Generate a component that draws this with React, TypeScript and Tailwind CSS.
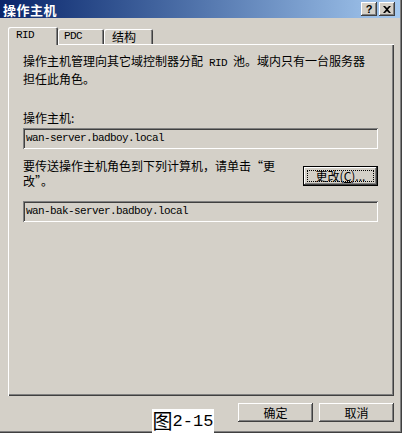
import React from "react";

const raised =
  "shadow-[inset_-1px_-1px_#404040,inset_1px_1px_#ffffff,inset_-2px_-2px_#808080,inset_2px_2px_#d4d0c8]";
const sunken =
  "shadow-[inset_1px_1px_#808080,inset_-1px_-1px_#ffffff,inset_2px_2px_#404040,inset_-2px_-2px_#d4d0c8]";
const cjk = "font-['Noto_Sans_CJK_SC','Liberation_Sans',sans-serif]";
const mono = "font-['Liberation_Mono',monospace] text-[11px] tracking-[-0.6px]";

function Mono({ children }: { children: React.ReactNode }) {
  return <span className={mono}>{children}</span>;
}

function TitleBtn({ children }: { children: React.ReactNode }) {
  return (
    <div
      className={`w-[16px] h-[14px] bg-[#d4d0c8] ${raised} flex items-center justify-center text-black font-bold text-[11px] leading-none font-['Liberation_Sans',sans-serif]`}
    >
      {children}
    </div>
  );
}

export default function App() {
  return (
    <div
      className={`w-[402px] h-[433px] bg-[#d4d0c8] ${cjk} text-[12px] text-black flex flex-col overflow-hidden relative shadow-[inset_-1px_-1px_#404040,inset_-2px_-2px_#808080]`}
    >
      {/* title bar */}
      <div className="h-[19px] mr-[2px] bg-gradient-to-r from-[#0a246a] to-[#a6caf0] flex items-center pl-[3px] pr-[5px]">
        <span className="text-white font-bold text-[13px] leading-none tracking-[0.5px]">操作主机</span>
        <div className="ml-auto flex gap-[2px]">
          <TitleBtn>?</TitleBtn>
          <TitleBtn>
            <svg width="8" height="7" viewBox="0 0 8 7">
              <path d="M0 0h2l2 2 2-2h2L5 3.5 8 7H6L4 5 2 7H0l3-3.5z" fill="#000" />
            </svg>
          </TitleBtn>
        </div>
      </div>

      <div className="px-[8px] pt-[8px]">
        {/* tabs */}
        <div className="flex items-end h-[18px]">
          <div className="relative z-10 h-[18px] w-[50px] -mb-px bg-[#d4d0c8] rounded-t-[2px] shadow-[inset_1px_1px_#ffffff,inset_-1px_0_#404040,inset_-2px_0_#808080] flex items-center pl-[8px] pb-[1px]">
            <Mono>RID</Mono>
          </div>
          <div className="h-[15px] w-[46px] rounded-t-[2px] shadow-[inset_1px_1px_#ffffff,inset_-1px_0_#404040,inset_-2px_0_#808080] flex items-center pl-[6px]">
            <Mono>PDC</Mono>
          </div>
          <div className="h-[15px] w-[49px] rounded-t-[2px] shadow-[inset_1px_1px_#ffffff,inset_-1px_0_#404040,inset_-2px_0_#808080] flex items-center pl-[8px] leading-none">
            结构
          </div>
        </div>

        {/* panel */}
        <div className="h-[352px] shadow-[inset_1px_1px_#ffffff,inset_-1px_-1px_#404040,inset_-2px_-2px_#808080] pl-[15px] pr-[16px] pt-[9px]">
          <div className="leading-[15px]">
            操作主机管理向其它域控制器分配<Mono> RID </Mono>池。域内只有一台服务器
            <br />
            担任此角色。
          </div>

          <div className="mt-[24px] leading-[15px]">操作主机:</div>
          <div className={`mt-[3px] h-[21px] ${sunken} flex items-center pl-[3px]`}>
            <Mono>wan-server.badboy.local</Mono>
          </div>

          <div className="mt-[9px] flex">
            <div className="leading-[15px]">
              要传送操作主机角色到下列计算机，请单击“更
              <br />
              改”。
            </div>
            <div className="ml-auto mt-[8px] h-[20px] w-[75px] border border-black bg-[#d4d0c8]">
              <div className={`h-full w-full ${raised} p-[3px]`}>
                <div className="h-full w-full border border-dotted border-black flex items-center justify-center leading-none whitespace-nowrap">
                  更改(<span className="underline">C</span>)...
                </div>
              </div>
            </div>
          </div>

          <div className={`mt-[13px] h-[21px] ${sunken} flex items-center pl-[3px]`}>
            <Mono>wan-bak-server.badboy.local</Mono>
          </div>
        </div>
      </div>

      {/* bottom row */}
      <div className="mt-[7px] flex items-start pl-[152px] pr-[8px]">
        <div className="mt-[6px] w-[62px] h-[24px] bg-white flex items-center justify-center leading-none text-black whitespace-nowrap">
          <span className="text-[20px]">图</span>
          <span className="font-['Liberation_Mono',monospace] text-[17px]">2-15</span>
        </div>
        <div className="ml-auto flex gap-[6px]">
          <div className={`w-[75px] h-[19px] ${raised} flex items-center justify-center leading-none`}>确定</div>
          <div className={`w-[75px] h-[19px] ${raised} flex items-center justify-center leading-none`}>取消</div>
        </div>
      </div>
    </div>
  );
}
